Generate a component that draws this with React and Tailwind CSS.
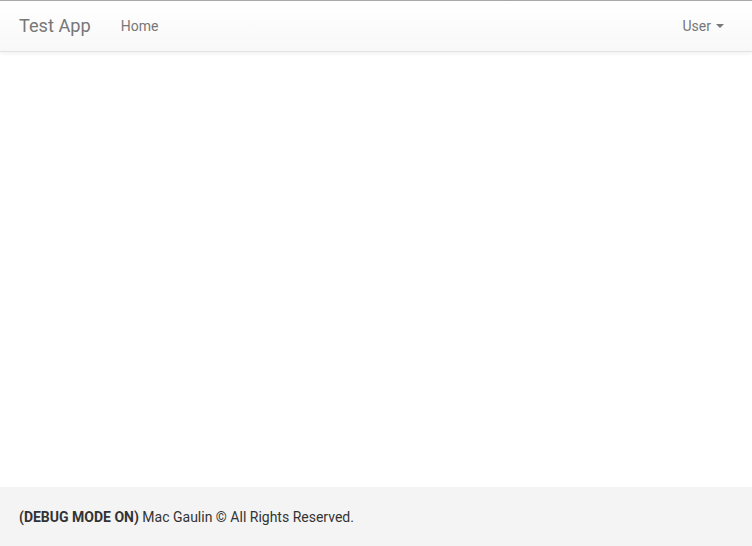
export default function App() {
  return (
    <div className="flex h-[546px] flex-col bg-white" style={{ fontFamily: 'Roboto, "Liberation Sans", sans-serif' }}>
      <nav className="flex h-[52px] items-center border-t border-b border-t-[#a8a8a8] border-b-[#e3e3e3] bg-gradient-to-b from-white to-[#f8f8f8] pl-[19px] pr-[28px] shadow-[0_1px_5px_rgba(0,0,0,0.075)]">
        <span className="text-[18.2px] leading-[20px] text-[#777]">Test App</span>
        <span className="ml-[30px] text-[14px] leading-[20px] text-[#777]">Home</span>
        <span className="ml-auto flex items-center text-[14px] leading-[20px] text-[#777]">
          User
          <span className="ml-[5px] inline-block h-0 w-0 border-t-[4px] border-r-[4px] border-l-[4px] border-t-[#777] border-r-transparent border-l-transparent"></span>
        </span>
      </nav>
      <main className="flex-1"></main>
      <footer className="flex h-[59px] items-center bg-[#f4f4f4] px-[19px] pt-[2px] text-[14px] text-[#333]">
        <span>
          <strong className="font-bold">(DEBUG MODE ON)</strong> Mac Gaulin © All Rights Reserved.
        </span>
      </footer>
    </div>
  );
}
